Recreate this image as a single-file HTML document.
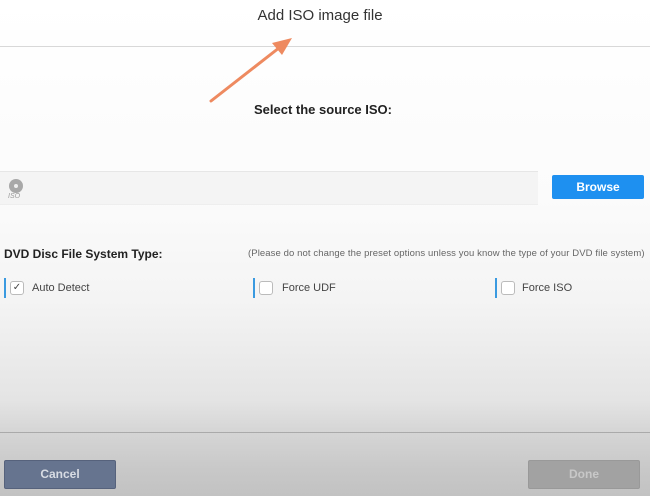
<!DOCTYPE html>
<html><head><style>
body{margin:0;width:650px;height:496px;overflow:hidden;font-family:"Liberation Sans","DejaVu Sans",sans-serif;
background:linear-gradient(#ffffff 0px,#fbfbfb 200px,#f4f4f4 300px,#e4e4e4 400px,#d6d6d6 430px,#c8c8c8 470px,#c2c2c2 496px);position:relative}
.a{position:absolute}
</style></head><body>
<div class="a" style="left:0;top:7px;width:640px;text-align:center;font-size:15px;color:#333">Add ISO image file</div>
<div class="a" style="left:0;top:46px;width:650px;height:1px;background:#d8d8d8"></div>
<svg class="a" style="left:0;top:0" width="650" height="120"><line x1="211" y1="101" x2="284" y2="44" stroke="#ee8a60" stroke-width="3" stroke-linecap="round"/><polygon points="292,38 272,43 282,55" fill="#ee8a60"/></svg>
<div class="a" style="left:248px;top:102px;width:150px;text-align:center;font-size:13px;font-weight:bold;color:#222;white-space:nowrap">Select the source ISO:</div>
<div class="a" style="left:0;top:171px;width:538px;height:32px;background:#f4f4f4;border-top:1px solid #e6e6e6;border-bottom:1px solid #eee"></div>
<svg class="a" style="left:6px;top:177px" width="20" height="22"><circle cx="10" cy="9" r="7" fill="#a8a8a8"/><circle cx="10" cy="9" r="2" fill="#eee"/><text x="2" y="21" font-size="7" font-style="italic" fill="#999" font-family="Liberation Sans">ISO</text></svg>
<div class="a" style="left:552px;top:175px;width:92px;height:24px;background:#1e90f0;border-radius:2px;color:#fff;font-weight:bold;font-size:12px;text-align:center;line-height:24px">Browse</div>
<div class="a" style="left:4px;top:247px;font-size:12px;font-weight:bold;color:#222">DVD Disc File System Type:</div>
<div class="a" style="left:248px;top:248px;font-size:9.5px;color:#666;white-space:nowrap;letter-spacing:0.1px">(Please do not change the preset options unless you know the type of your DVD file system)</div>
<div class="a" style="left:4px;top:278px;width:2px;height:20px;background:#3a9ae0"></div>
<div class="a" style="left:10px;top:281px;width:12px;height:12px;border:1px solid #bbb;border-radius:3px;background:#fff;font-size:10px;line-height:12px;text-align:center;color:#444">✓</div>
<div class="a" style="left:32px;top:282px;font-size:11px;color:#444">Auto Detect</div>
<div class="a" style="left:253px;top:278px;width:2px;height:20px;background:#3a9ae0"></div>
<div class="a" style="left:259px;top:281px;width:12px;height:12px;border:1px solid #bbb;border-radius:3px;background:#fff"></div>
<div class="a" style="left:282px;top:282px;font-size:11px;color:#444">Force UDF</div>
<div class="a" style="left:495px;top:278px;width:2px;height:20px;background:#3a9ae0"></div>
<div class="a" style="left:501px;top:281px;width:12px;height:12px;border:1px solid #bbb;border-radius:3px;background:#fff"></div>
<div class="a" style="left:522px;top:282px;font-size:11px;color:#444">Force ISO</div>
<div class="a" style="left:0;top:432px;width:650px;height:1px;background:#aaa"></div>
<div class="a" style="left:4px;top:460px;width:110px;height:27px;background:#66748f;border:1px solid #56627c;border-radius:2px;color:#d8dce4;font-weight:bold;font-size:12px;text-align:center;line-height:27px">Cancel</div>
<div class="a" style="left:528px;top:460px;width:110px;height:27px;background:#a2a2a2;border:1px solid #999;border-radius:2px;color:#c8c8c8;font-weight:bold;font-size:12px;text-align:center;line-height:27px">Done</div>
</body></html>
